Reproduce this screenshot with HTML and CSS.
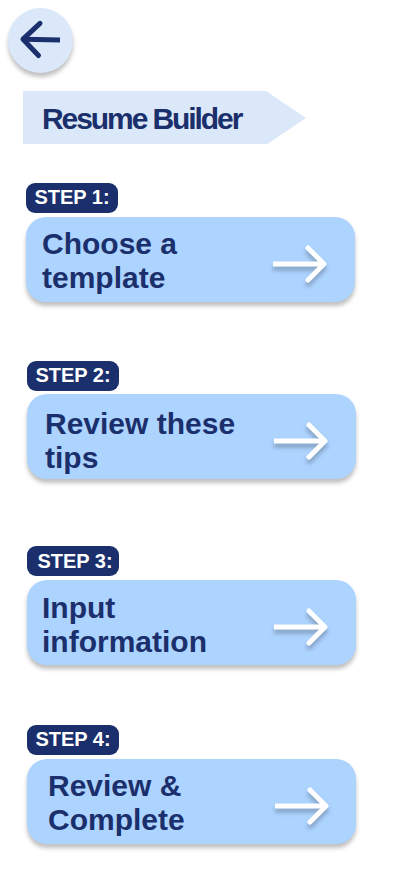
FILE: index.html
```html
<!DOCTYPE html>
<html lang="en">
<head>
<meta charset="utf-8">
<title>Resume Builder</title>
<link rel="stylesheet" href="styles.css">
</head>
<body>
<main class="screen">
  <button class="back" aria-label="Back"><svg width="65" height="65" viewBox="0 0 65 65"><path class="shaft" d="M52 32L16 31.300"/><path class="head" d="M32 15.300L15 31.200L30.500 47.500"/></svg></button>
  <h1 class="banner"><span>Resume Builder</span></h1>
  <section class="step one"><h2 class="tag">STEP 1:</h2><a class="card"><span class="label">Choose a<br>template</span><svg class="arrow" width="58" height="42" viewBox="0 0 58 42"><path class="shaft" d="M2 21H53"/><path class="head" d="M37 5L53 21L37 37"/></svg></a></section>
  <section class="step two"><h2 class="tag">STEP 2:</h2><a class="card"><span class="label">Review these<br>tips</span><svg class="arrow" width="58" height="42" viewBox="0 0 58 42"><path class="shaft" d="M2 21H53"/><path class="head" d="M37 5L53 21L37 37"/></svg></a></section>
  <section class="step three"><h2 class="tag">STEP 3:</h2><a class="card"><span class="label">Input<br>information</span><svg class="arrow" width="58" height="42" viewBox="0 0 58 42"><path class="shaft" d="M2 21H53"/><path class="head" d="M37 5L53 21L37 37"/></svg></a></section>
  <section class="step four"><h2 class="tag">STEP 4:</h2><a class="card"><span class="label">Review &amp;<br>Complete</span><svg class="arrow" width="58" height="42" viewBox="0 0 58 42"><path class="shaft" d="M2 21H53"/><path class="head" d="M37 5L53 21L37 37"/></svg></a></section>
</main>
</body>
</html>
```
FILE: styles.css
```css
* { box-sizing: border-box; }
body { margin: 0; background: #fff; color: #1a2f6b; font-family: "Liberation Sans", Arial, sans-serif; }
h1, h2 { margin: 0; }
.screen { width: 414px; height: 896px; padding: 8px 0 0 8px; overflow: hidden; }
.back { display: block; width: 65px; height: 65px; padding: 0; border: 0; border-radius: 50%; background: #dbe8f9; box-shadow: 0 4px 4px rgba(0,0,0,.25); }
.back svg { display: block; fill: none; stroke: #1a2f6b; stroke-width: 5; }
.head { stroke-linecap: round; stroke-linejoin: round; }
.banner { display: flex; align-items: center; width: 283px; height: 54px; margin: 18px 0 0 15px; padding: 1px 0 0 19px; background: #dbe8f9; clip-path: polygon(0 0, 243px 0, 100% 27px, 243px 100%, 243px 53px, 0 53px); font-size: 30px; letter-spacing: -2.080px; white-space: nowrap; }
.step { width: 329px; margin-left: 19px; }
.one { margin: 38px 0 0 18px; }
.two { margin-top: 59px; }
.three { margin-top: 67px; }
.four { margin-top: 60px; }
.tag { width: 92px; height: 30px; border-radius: 9px; background: #1a2f6b; color: #fff; font-size: 20px; line-height: 29px; text-align: center; white-space: nowrap; }
.three .tag { padding-left: 4px; line-height: 31px; }
.card { display: flex; align-items: flex-start; justify-content: space-between; height: 85px; margin-top: 4px; padding: 10px 26px 0 16px; border-radius: 20px; background: #add3ff; box-shadow: 0 4px 4px rgba(0,0,0,.25); }
.two .card { margin-top: 3px; padding: 13px 26px 0 18px; }
.three .card { padding: 11px 26px 0 15px; }
.four .card { padding: 10px 25px 0 21px; }
.label { font-size: 30px; line-height: 34px; font-weight: bold; white-space: nowrap; }
.arrow { margin-top: 16px; fill: none; stroke: #fff; stroke-width: 5; overflow: visible; filter: drop-shadow(0 4px 2px rgba(0,0,0,.25)); }
.two .arrow { margin-top: 13px; }
.three .arrow { margin-top: 15px; }
```
